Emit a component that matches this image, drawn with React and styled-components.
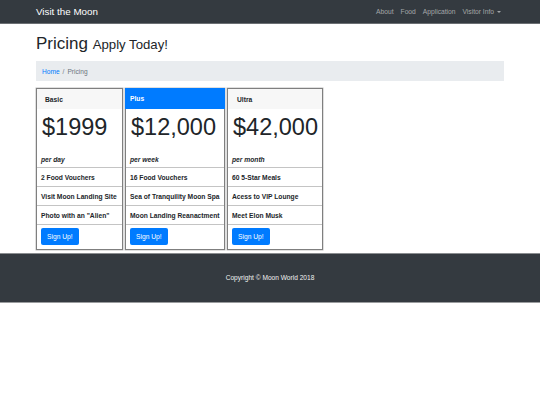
import React from "react";
import styled, { createGlobalStyle } from "styled-components";

const Global = createGlobalStyle`
  html, body { margin: 0; padding: 0; background: #fff; }
  body { font-family: "Liberation Sans", Arial, sans-serif; color: #212529; }
  * { box-sizing: border-box; }
`;

const Navbar = styled.nav`
  height: 24px;
  background: #343a40;
  border-bottom: 1px solid #6b6f73;
  display: flex;
  align-items: center;
  justify-content: space-between;
  padding: 0 36px;
`;

const Brand = styled.a`
  color: #fff;
  font-size: 9.8px;
  text-decoration: none;
  line-height: 1;
`;

const NavList = styled.div`
  display: flex;
  align-items: center;
  gap: 7px;
  padding-right: 3px;
`;

const NavLink = styled.a`
  color: rgba(255, 255, 255, 0.55);
  font-size: 6.7px;
  text-decoration: none;
  display: flex;
  align-items: center;
  gap: 3px;
`;

const Caret = styled.span`
  width: 0;
  height: 0;
  border-left: 2px solid transparent;
  border-right: 2px solid transparent;
  border-top: 2px solid rgba(255, 255, 255, 0.55);
`;

const Main = styled.main`
  padding: 0 36px;
`;

const Title = styled.h1`
  margin: 10px 0 7px;
  font-size: 17px;
  line-height: 20px;
  font-weight: 400;
`;

const Small = styled.small`
  font-size: 13.2px;
  line-height: 1;
`;

const Breadcrumb = styled.div`
  height: 20px;
  background: #e9ecef;
  display: flex;
  align-items: center;
  padding: 0 6px;
  font-size: 6.6px;
  color: #6c757d;
  gap: 3px;
`;

const Crumb = styled.a`
  color: #007bff;
  text-decoration: none;
`;

const Deck = styled.div`
  display: flex;
  gap: 2px;
  margin-top: 7px;
  align-items: flex-start;
`;

const Card = styled.div`
  width: ${(p) => p.$w}px;
  border: 1px solid #7f7f7f;
  box-shadow: 0 0 0 0.5px #c0c0c0;
  display: flex;
  flex-direction: column;
  background: #fff;
`;

const Header = styled.div`
  height: ${(p) => (p.$featured ? 21 : 20)}px;
  margin: ${(p) => (p.$featured ? "-1px -1px 0" : "0")};
  background: ${(p) => (p.$featured ? "#007bff" : "#f7f7f7")};
  color: ${(p) => (p.$featured ? "#fff" : "#212529")};
  font-size: 6.7px;
  font-weight: 700;
  display: flex;
  align-items: center;
  padding-left: ${(p) => p.$pad}px;
  padding-top: ${(p) => (p.$featured ? 0 : 1)}px;
`;

const PriceBox = styled.div`
  height: 58px;
  padding: 4px 4px 0 5px;
  display: flex;
  flex-direction: column;
`;

const Price = styled.div`
  font-size: 23.5px;
  line-height: 28px;
  font-weight: 400;
  color: #212529;
  white-space: nowrap;
`;

const Period = styled.div`
  margin-top: 14px;
  margin-left: -1px;
  font-size: 6.7px;
  line-height: 10px;
  font-style: italic;
  font-weight: 700;
`;

const Row = styled.div`
  height: 19px;
  border-top: 1px solid #c4c4c4;
  padding: 0 4px;
  display: flex;
  align-items: center;
  font-size: 6.7px;
  font-weight: 700;
  white-space: nowrap;
`;

const ButtonRow = styled.div`
  height: 25px;
  border-top: 1px solid #c4c4c4;
  padding: 3px 4px 0;
  display: flex;
  align-items: flex-start;
`;

const Button = styled.button`
  height: 17px;
  padding: 0 6px;
  border: none;
  border-radius: 2px;
  background: #007bff;
  color: #fff;
  font-family: inherit;
  font-size: 6.7px;
  cursor: pointer;
`;

const Footer = styled.footer`
  margin-top: 3px;
  height: 50px;
  background: #343a40;
  border-top: 1px solid #8a8d90;
  border-bottom: 1px solid #9a9c9e;
  display: flex;
  align-items: center;
  justify-content: center;
  color: #f1f1f1;
  font-size: 6.6px;
  padding-bottom: 1px;
`;

const plans = [
  { name: "Basic", w: 87, pad: 8, price: "$1999", period: "per day", items: ["2 Food Vouchers", "Visit Moon Landing Site", 'Photo with an "Alien"'] },
  { name: "Plus", w: 100, pad: 5, featured: true, price: "$12,000", period: "per week", items: ["16 Food Vouchers", "Sea of Tranquility Moon Spa", "Moon Landing Reanactment"] },
  { name: "Ultra", w: 96, pad: 9, price: "$42,000", period: "per month", items: ["60 5-Star Meals", "Acess to VIP Lounge", "Meet Elon Musk"] },
];

export default function App() {
  return (
    <>
      <Global />
      <Navbar>
        <Brand href="#">Visit the Moon</Brand>
        <NavList>
          <NavLink href="#">About</NavLink>
          <NavLink href="#">Food</NavLink>
          <NavLink href="#">Application</NavLink>
          <NavLink href="#">
            Visitor Info <Caret />
          </NavLink>
        </NavList>
      </Navbar>
      <Main>
        <Title>
          Pricing <Small>Apply Today!</Small>
        </Title>
        <Breadcrumb>
          <Crumb href="#">Home</Crumb>
          <span>/</span>
          <span>Pricing</span>
        </Breadcrumb>
        <Deck>
          {plans.map((p) => (
            <Card key={p.name} $w={p.w}>
              <Header $featured={p.featured} $pad={p.pad}>
                {p.name}
              </Header>
              <PriceBox>
                <Price>{p.price}</Price>
                <Period>{p.period}</Period>
              </PriceBox>
              {p.items.map((it) => (
                <Row key={it}>{it}</Row>
              ))}
              <ButtonRow>
                <Button>Sign Up!</Button>
              </ButtonRow>
            </Card>
          ))}
        </Deck>
      </Main>
      <Footer>Copyright © Moon World 2018</Footer>
    </>
  );
}
